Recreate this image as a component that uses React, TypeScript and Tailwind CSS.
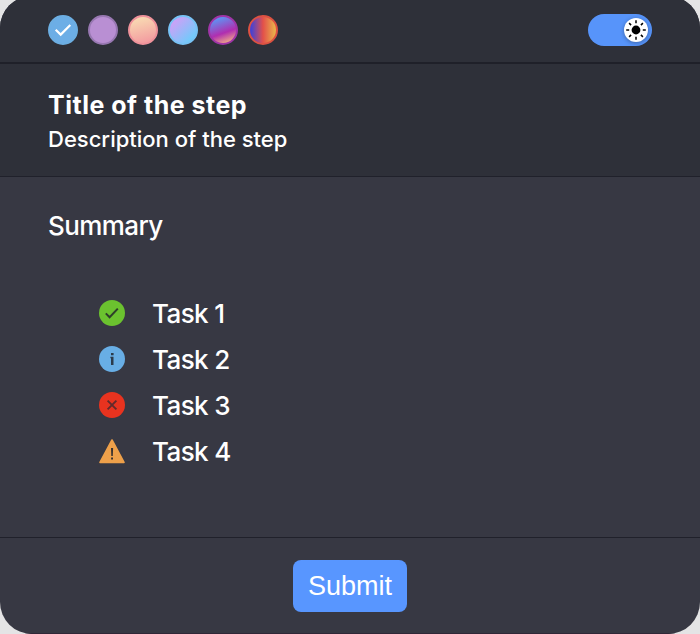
import { useState } from "react";
import type { ReactNode } from "react";

type Swatch = {
  name: string;
  className: string;
};

const SWATCHES: Swatch[] = [
  { name: "Blue", className: "border-[#6caee2] bg-[#6caee6]" },
  { name: "Purple", className: "border-[#9878b2] bg-[#b98fd3]" },
  { name: "Peach", className: "border-[#ef929b] bg-[linear-gradient(165deg,#f9e0b4_8%,#f28e9c)]" },
  { name: "Sky", className: "border-[#78c2f5] bg-[linear-gradient(135deg,#dc9af6_10%,#70cbfb_80%)]" },
  { name: "Sunset", className: "border-[#a035a8] bg-[linear-gradient(160deg,#5a98f6_15%,#b02eb0_58%,#f5b584_88%)]" },
  { name: "Fire", className: "border-[#dc5142] bg-[linear-gradient(90deg,#4a42cf_12%,#e3504a_50%,#e9b04a_90%)]" },
];

type Status = "success" | "info" | "error" | "warning";

const TASKS: { label: string; status: Status }[] = [
  { label: "Task 1", status: "success" },
  { label: "Task 2", status: "info" },
  { label: "Task 3", status: "error" },
  { label: "Task 4", status: "warning" },
];

const ICONS: Record<Status, ReactNode> = {
  success: (
    <>
      <circle cx="13" cy="13" r="13" fill="#6bc22f" />
      <path d="M6.8 13.4l3.8 3.8 8.2-8.6" stroke="#2e3f2a" strokeWidth="2" fill="none" />
    </>
  ),
  info: (
    <>
      <circle cx="13" cy="13" r="13" fill="#68aee5" />
      <path d="M12 7h2.6v2.3H12zM11.4 10.8h3.1v8.2H12v-6.7h-.6z" fill="#2b3b4b" />
    </>
  ),
  error: (
    <>
      <circle cx="13" cy="13" r="13" fill="#e8331f" />
      <path d="M8.6 8.6l8.8 8.8M17.4 8.6l-8.8 8.8" stroke="#632a2b" strokeWidth="1.9" fill="none" />
    </>
  ),
  warning: (
    <>
      <path d="M13 2L25 24.4H1z" fill="#eea04a" stroke="#eea04a" strokeWidth="1.6" strokeLinejoin="round" />
      <path d="M12 10h2.1l-.3 8h-1.5zM12.1 19.6h1.9v2h-1.9z" fill="#37302f" />
    </>
  ),
};

export default function App() {
  const [selected, setSelected] = useState(0);

  return (
    <div className="h-[634px] w-[700px] overflow-hidden bg-[#e4e4e5] font-['Inter',sans-serif] text-white">
      <div className="-mt-1 flex h-[638px] flex-col overflow-hidden rounded-[32px] bg-[#373843]">
        <header className="flex h-[68px] shrink-0 items-center justify-between border-b-2 border-[#1f2029] bg-[#2e3039] px-12 pt-0.5">
          <div className="flex gap-2.5">
            {SWATCHES.map((s, i) => (
              <button
                key={s.name}
                aria-label={s.name}
                onClick={() => setSelected(i)}
                className={`grid size-[30px] place-items-center rounded-full border-2 bg-origin-border ${s.className}`}
              >
                {i === selected && (
                  <svg width="18" height="14" viewBox="0 0 18 14" fill="none">
                    <path d="M1.7 6.8l5 4.8L16.3 2" stroke="white" strokeWidth="2.2" />
                  </svg>
                )}
              </button>
            ))}
          </div>
          <ThemeToggle />
        </header>

        <section className="h-[113px] shrink-0 border-b border-[#20212b] bg-[#2e3039] px-12 pt-[25px] whitespace-nowrap">
          <h1 className="text-[25px] leading-8 font-bold tracking-[0.5px]">Title of the step</h1>
          <p className="mt-0.5 text-[22px] leading-8 font-[450]">Description of the step</p>
        </section>

        <main className="h-[361px] shrink-0 border-b border-[#20212b] px-12 pt-[31px] text-[26px] font-[450] tracking-[-0.6px] whitespace-nowrap">
          <h2 className="leading-9">Summary</h2>
          <ul className="mt-[46px] ml-[51px]">
            {TASKS.map((t) => (
              <li key={t.label} className="flex h-[46px] items-center gap-[27px]">
                <svg width="26" height="26" viewBox="0 0 26 26" className="shrink-0">
                  {ICONS[t.status]}
                </svg>
                <span>{t.label}</span>
              </li>
            ))}
          </ul>
        </main>

        <footer className="flex grow items-start justify-center border-b border-[#302737] pt-[22px]">
          <button className="h-[52px] w-[114px] rounded-lg bg-[#5896ff] font-['Liberation_Sans',sans-serif] text-[27px] font-normal">
            Submit
          </button>
        </footer>
      </div>
    </div>
  );
}

function ThemeToggle() {
  return (
    <button
      aria-label="Toggle theme"
      className="flex h-8 w-16 items-center justify-end rounded-full bg-[#5794fa] pr-1"
    >
      <span className="grid size-6 place-items-center rounded-full bg-white shadow-[0_1px_4px_#0005]">
        <svg width="24" height="24" viewBox="0 0 24 24" stroke="black" strokeWidth="1.5">
          <circle cx="12" cy="12" r="4.4" fill="black" stroke="none" />
          <path d="M12 2.2v3M12 18.8v3M2.2 12h3M18.8 12h3M5.1 5.1l2 2M16.9 16.9l2 2M5.1 18.9l2-2M16.9 7.1l2-2" />
        </svg>
      </span>
    </button>
  );
}
